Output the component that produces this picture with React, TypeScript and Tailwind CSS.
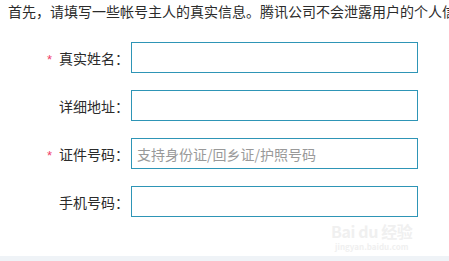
const fields = [
  { label: "真实姓名：", required: true, placeholder: "" },
  { label: "详细地址：", required: false, placeholder: "" },
  { label: "证件号码：", required: true, placeholder: "支持身份证/回乡证/护照号码" },
  { label: "手机号码：", required: false, placeholder: "" },
];

export default function App() {
  return (
    <div
      className="flex h-[261px] w-[449px] flex-col overflow-hidden bg-white text-[14px] text-[#2b2b2b]"
      style={{ fontFamily: '"Noto Sans CJK SC", "Noto Sans", sans-serif' }}
    >
      <p className="whitespace-nowrap pl-2 pt-[1px] leading-[20px]">
        首先，请填写一些帐号主人的真实信息。腾讯公司不会泄露用户的个人信
      </p>
      <div className="relative mt-[21px] flex flex-1 flex-col gap-[17px]">
        {fields.map((f) => (
          <div key={f.label} className="flex h-[31px] items-center">
            <label className="flex w-[129px] items-center justify-end leading-none">
              {f.required && (
                <span
                  className="mr-[7px] mt-[3px] text-[13px] text-[#f0406a]"
                  style={{ fontFamily: '"Liberation Sans", sans-serif' }}
                >
                  *
                </span>
              )}
              <span>{f.label}</span>
            </label>
            <input
              className="ml-[2px] h-[31px] w-[287px] border border-[#2e95b6] bg-white px-[5px] text-[14px] text-[#333] outline-none placeholder:text-[#999]"
              placeholder={f.placeholder}
            />
          </div>
        ))}
        <div className="pointer-events-none absolute left-[331px] top-[181px] flex select-none flex-col items-center gap-[4px] text-[#f0f0f0]">
          <span className="text-[16px] font-bold leading-none tracking-tight">Bai du 经验</span>
          <span className="text-[8px] font-bold leading-none">jingyan.baidu.com</span>
        </div>
      </div>
      <div className="h-[5px] bg-[#eff3f7]" />
    </div>
  );
}
